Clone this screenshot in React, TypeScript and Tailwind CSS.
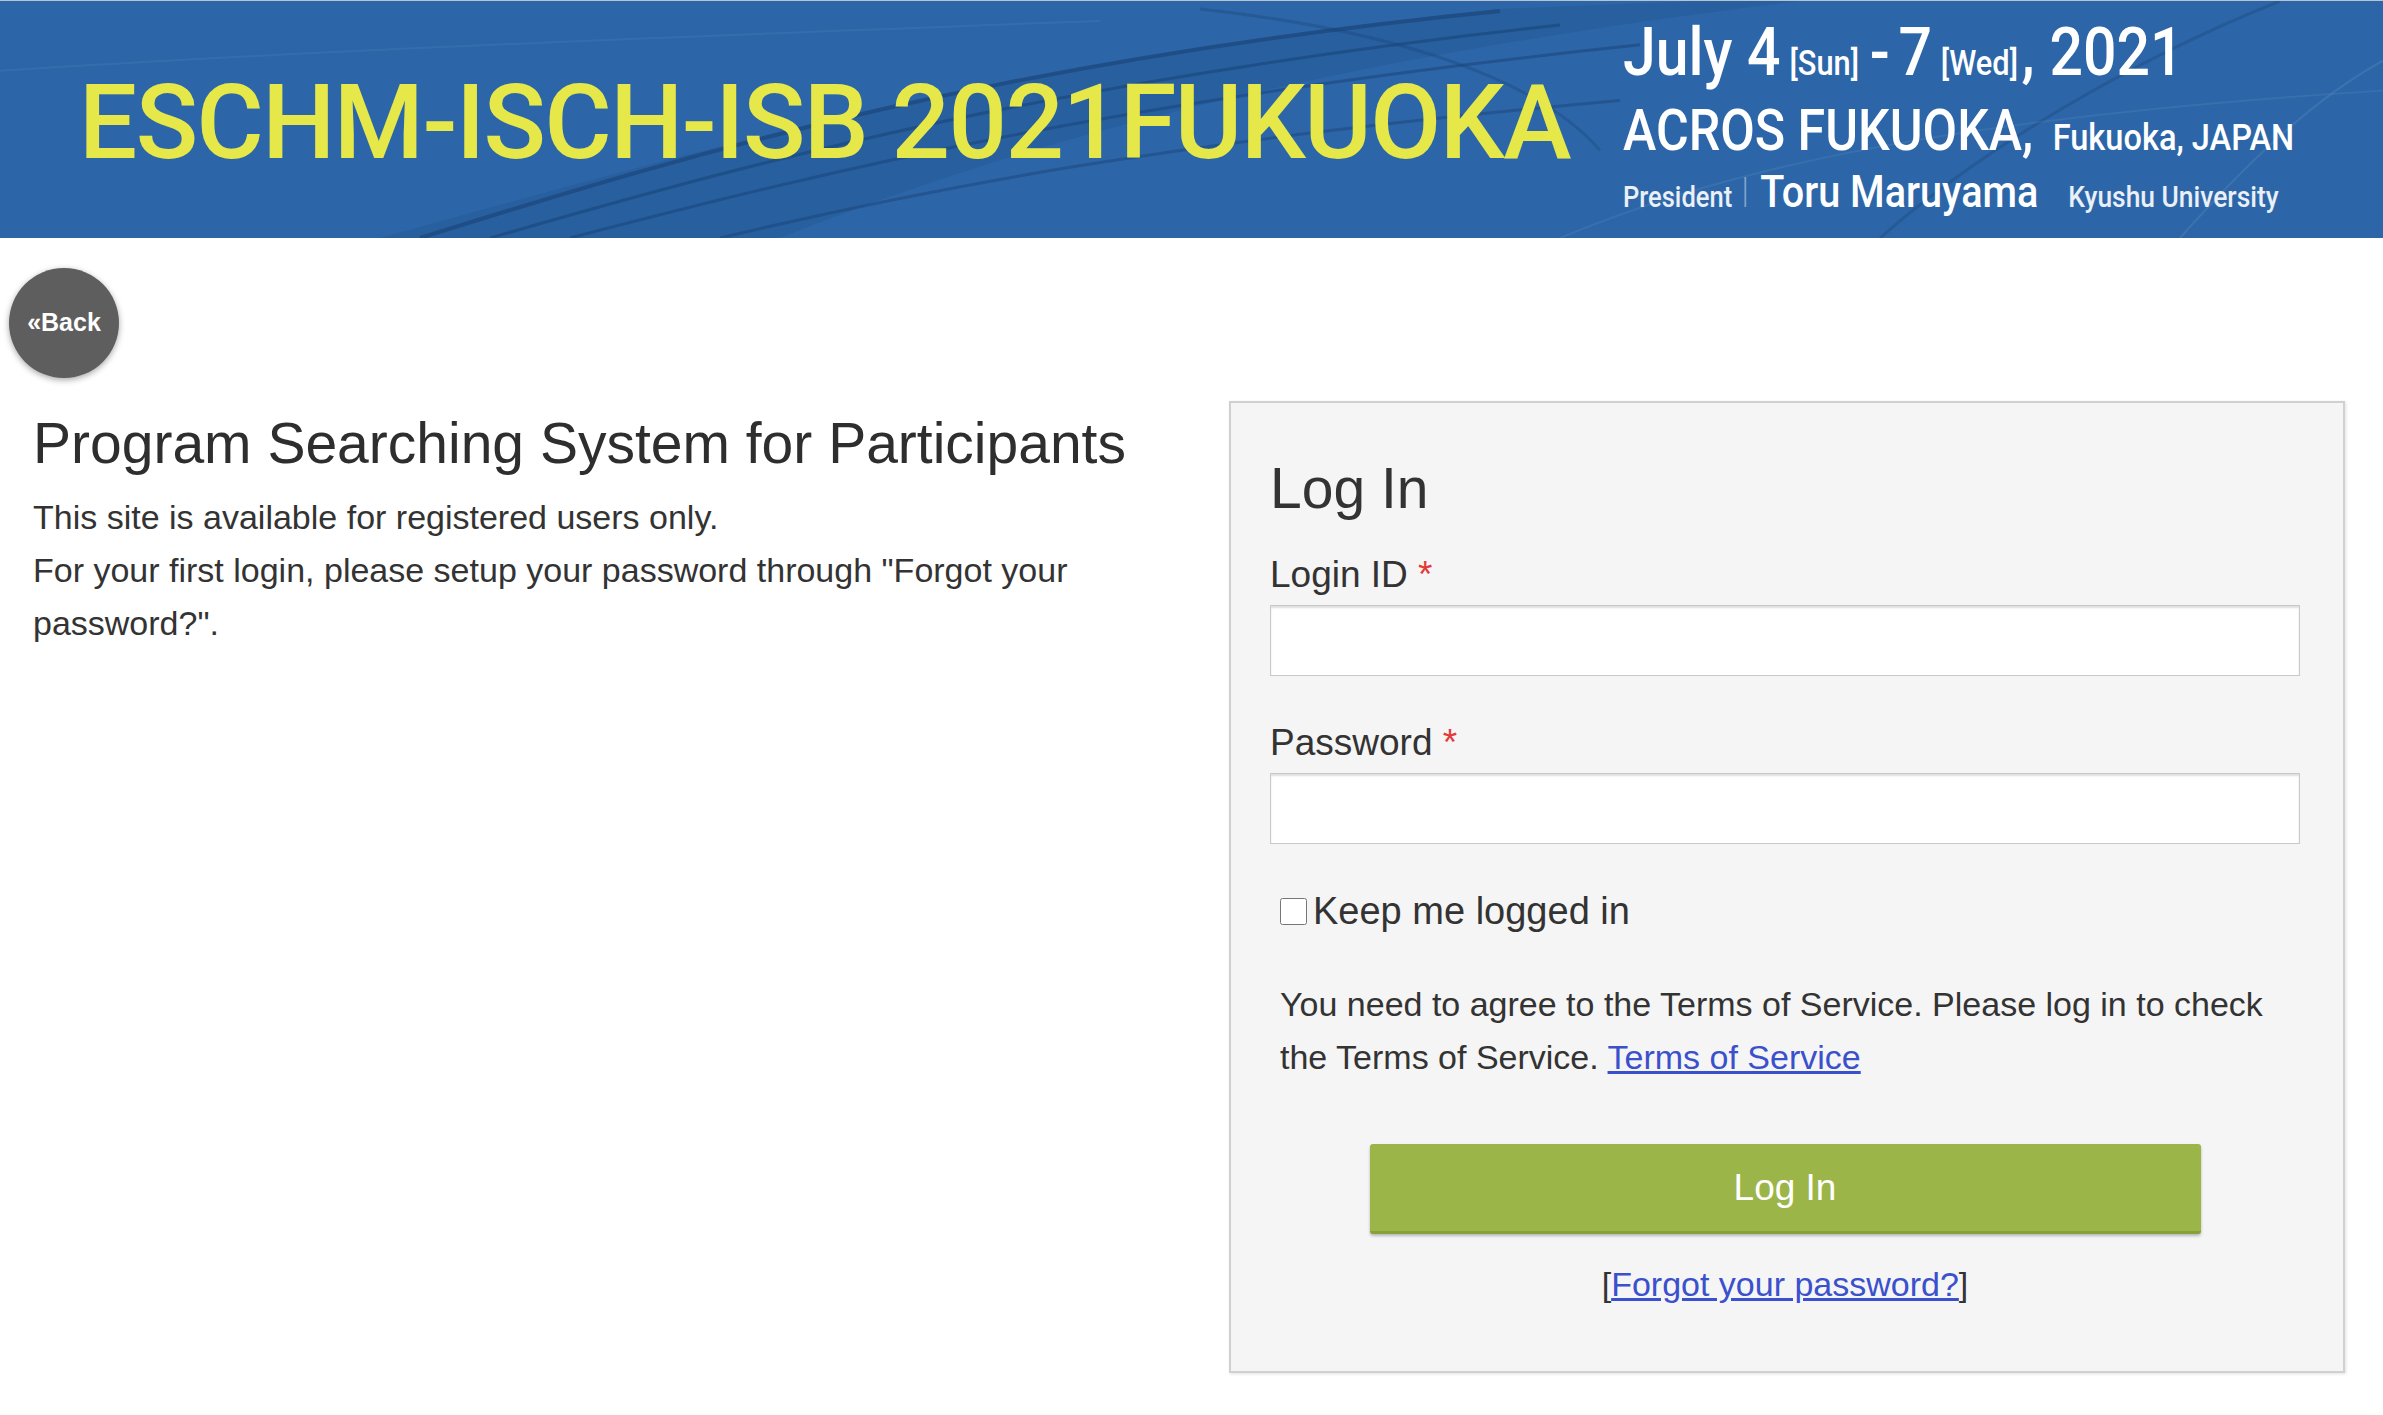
function Banner() {
  return (
    <header className="relative h-[238px] w-full overflow-hidden bg-[#2c66a8] border-t border-[#b9c3cf]">
      <svg
        className="absolute inset-0 h-full w-full"
        viewBox="0 0 2383 238"
        preserveAspectRatio="none"
        fill="none"
      >
        <path d="M380 238 C 700 150, 1000 60, 1500 8 L 1700 0 L 1800 0 C 1300 60, 1000 150, 780 238 Z" fill="#1f4f8c" opacity="0.3" />
        <path d="M420 238 C 700 150, 1000 60, 1500 10" stroke="#1b4478" strokeWidth="4" opacity="0.65" />
        <path d="M490 238 C 760 160, 1050 80, 1560 24" stroke="#1b4478" strokeWidth="3" opacity="0.6" />
        <path d="M570 238 C 830 170, 1110 100, 1640 44" stroke="#1b4478" strokeWidth="3" opacity="0.55" />
        <path d="M720 238 C 920 190, 1170 140, 1620 100" stroke="#1b4478" strokeWidth="3" opacity="0.5" />
        <path d="M0 70 C 300 50, 700 35, 1100 20" stroke="#ffffff" strokeWidth="2" opacity="0.05" />
        <path d="M1200 8 C 1400 30, 1540 80, 1600 150" stroke="#1b4478" strokeWidth="3" opacity="0.35" />
        <path d="M1880 238 C 1980 150, 2130 60, 2280 0" stroke="#1b4478" strokeWidth="3" opacity="0.35" />
        <path d="M2180 238 C 2240 170, 2310 100, 2383 60" stroke="#ffffff" strokeWidth="2" opacity="0.08" />
        <path d="M1560 238 C 1700 180, 1900 120, 2383 90" stroke="#ffffff" strokeWidth="2" opacity="0.06" />
      </svg>

      <div className="relative flex h-full items-start font-['Roboto',sans-serif]">
        <div className="w-[1623px] shrink-0 pl-[79px] pt-[70px]">
          <h1 className="whitespace-nowrap text-[103px] font-medium leading-none tracking-[-1.5px] text-[#e6e84a]">
            ESCHM-ISCH-ISB 2021FUKUOKA
          </h1>
        </div>

        <div className="origin-left scale-x-[0.88] whitespace-nowrap text-white font-medium">
          <div className="mt-[18px] flex items-baseline text-[67px] leading-none">
            <span>July 4</span>
            <span className="ml-[10px] text-[35px]">[Sun]</span>
            <span className="ml-[12px]">-</span>
            <span className="ml-[10px]">7</span>
            <span className="ml-[10px] text-[35px]">[Wed]</span>
            <span className="ml-[4px]">, 2021</span>
          </div>
          <div className="mt-[16px] flex items-baseline text-[57px] leading-none">
            <span>ACROS FUKUOKA,</span>
            <span className="ml-[22px] text-[37px]">Fukuoka, JAPAN</span>
          </div>
          <div className="mt-[10px] flex items-baseline text-[45px] leading-none">
            <span className="text-[29px] text-white/90">President</span>
            <span className="ml-[14px] mr-[16px] inline-block h-[30px] w-[2px] self-center bg-white/40" />
            <span>Toru Maruyama</span>
            <span className="ml-[34px] text-[30px] text-white/90">Kyushu University</span>
          </div>
        </div>
      </div>
    </header>
  );
}

function Field({ label, type }: { label: string; type: string }) {
  return (
    <div>
      <label className="block text-[37px] leading-[52px]">
        {label} <span className="text-[#e23b3b]">*</span>
      </label>
      <input
        type={type}
        className="mt-[4px] block h-[71px] w-full border border-[#c9c9c9] bg-white shadow-[inset_0_2px_2px_rgba(0,0,0,0.13)] outline-none"
      />
    </div>
  );
}

function LoginPanel() {
  return (
    <div className="w-[1116px] shrink-0 border-2 border-[#d0d0d0] bg-[#f5f5f5] pb-[60px] pl-[39px] pr-[43px] pt-[54px] shadow-[1px_1px_3px_rgba(0,0,0,0.12)]">
      <h2 className="text-[57px] leading-[63px]">Log In</h2>
      <div className="mt-[29px]">
        <Field label="Login ID" type="text" />
      </div>
      <div className="mt-[41px]">
        <Field label="Password" type="password" />
      </div>
      <label className="mt-[41px] flex h-[52px] items-center gap-[6px] pl-[10px] text-[38px]">
        <input type="checkbox" className="h-[27px] w-[27px] m-0" />
        <span>Keep me logged in</span>
      </label>
      <p className="mt-[41px] px-[10px] text-[34px] leading-[53px]">
        You need to agree to the Terms of Service. Please log in to check the Terms of Service.{" "}
        <a href="#" className="text-[#3a50cc] underline">
          Terms of Service
        </a>
      </p>
      <button className="mx-auto mt-[60px] block h-[90px] w-[831px] rounded-[3px] border-b-[3px] border-[#86a03a] bg-[#9cb548] text-[37px] text-white shadow-[0_2px_3px_rgba(0,0,0,0.25)]">
        Log In
      </button>
      <p className="mt-[24px] text-center text-[34px] leading-[53px]">
        [
        <a href="#" className="text-[#3a50cc] underline">
          Forgot your password?
        </a>
        ]
      </p>
    </div>
  );
}

export default function App() {
  return (
    <div className="min-h-screen w-full bg-white text-[#333] font-['Liberation_Sans',Arial,sans-serif]">
      <Banner />
      <div className="pl-[9px] pt-[30px]">
        <button className="flex h-[110px] w-[110px] items-center justify-center rounded-full bg-[#5e5e5e] text-[25px] font-bold text-white shadow-[0_2px_6px_rgba(0,0,0,0.35)]">
          «Back
        </button>
      </div>
      <div className="flex items-start pl-[33px] pr-[38px] pt-[23px]">
        <section className="flex-1 pr-10 pt-[11px]">
          <h1 className="text-[57px] leading-[63px] text-[#2e2e2e]">
            Program Searching System for Participants
          </h1>
          <div className="mt-[16px] text-[34px] leading-[53px]">
            <p>This site is available for registered users only.</p>
            <p>For your first login, please setup your password through "Forgot your password?".</p>
          </div>
        </section>
        <LoginPanel />
      </div>
    </div>
  );
}
